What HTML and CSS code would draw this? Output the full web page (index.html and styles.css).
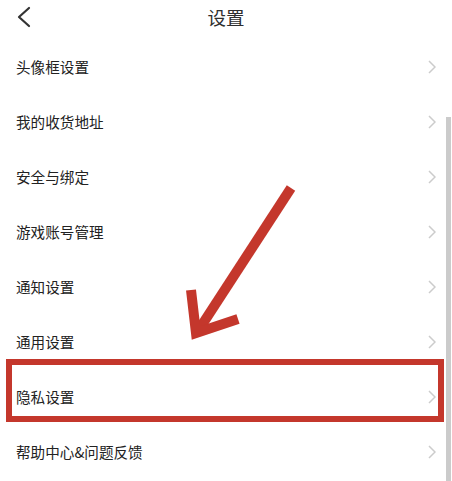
FILE: index.html
```html
<!DOCTYPE html>
<html lang="zh">
<head>
<meta charset="utf-8">
<title>设置</title>
<link rel="stylesheet" href="styles.css">
</head>
<body>
<div class="page">
  <header class="topbar">
    <div class="back">
      <svg width="14" height="22" viewBox="0 0 14 22"><polyline points="12,2 2,11 12,20" fill="none" stroke="#333" stroke-width="2.2" stroke-linecap="round" stroke-linejoin="round"/></svg>
    </div>
    <h1 class="title">设置</h1>
    <div class="spacer"></div>
  </header>
  <ul class="list">
    <li class="row"><span class="label">头像框设置</span><span class="chev"><svg width="8" height="14" viewBox="0 0 8 14"><polyline points="1,1 7,7 1,13" fill="none" stroke="#cccccc" stroke-width="1.5"/></svg></span></li>
    <li class="row"><span class="label">我的收货地址</span><span class="chev"><svg width="8" height="14" viewBox="0 0 8 14"><polyline points="1,1 7,7 1,13" fill="none" stroke="#cccccc" stroke-width="1.5"/></svg></span></li>
    <li class="row"><span class="label">安全与绑定</span><span class="chev"><svg width="8" height="14" viewBox="0 0 8 14"><polyline points="1,1 7,7 1,13" fill="none" stroke="#cccccc" stroke-width="1.5"/></svg></span></li>
    <li class="row"><span class="label">游戏账号管理</span><span class="chev"><svg width="8" height="14" viewBox="0 0 8 14"><polyline points="1,1 7,7 1,13" fill="none" stroke="#cccccc" stroke-width="1.5"/></svg></span></li>
    <li class="row"><span class="label">通知设置</span><span class="chev"><svg width="8" height="14" viewBox="0 0 8 14"><polyline points="1,1 7,7 1,13" fill="none" stroke="#cccccc" stroke-width="1.5"/></svg></span></li>
    <li class="row"><span class="label">通用设置</span><span class="chev"><svg width="8" height="14" viewBox="0 0 8 14"><polyline points="1,1 7,7 1,13" fill="none" stroke="#cccccc" stroke-width="1.5"/></svg></span></li>
    <li class="row"><span class="label">隐私设置</span><span class="chev"><svg width="8" height="14" viewBox="0 0 8 14"><polyline points="1,1 7,7 1,13" fill="none" stroke="#cccccc" stroke-width="1.5"/></svg></span></li>
    <li class="row"><span class="label">帮助中心&amp;问题反馈</span><span class="chev"><svg width="8" height="14" viewBox="0 0 8 14"><polyline points="1,1 7,7 1,13" fill="none" stroke="#cccccc" stroke-width="1.5"/></svg></span></li>
  </ul>
  <div class="scrollbar"></div>
  <div class="highlight"></div>
  <svg class="arrow" width="452" height="481" viewBox="0 0 452 481">
    <line x1="291" y1="188" x2="198" y2="331" stroke="#c4372c" stroke-width="10"/>
    <polyline points="191,290 196,333 238,319" fill="none" stroke="#c4372c" stroke-width="10" stroke-linejoin="miter"/>
  </svg>
</div>
</body>
</html>
```
FILE: styles.css
```css
* { box-sizing: border-box; }
html, body {
  margin: 0;
  padding: 0;
  background: #ffffff;
}
body {
  font-family: "Noto Sans CJK SC", "Noto Sans", sans-serif;
  color: #333333;
}
.page {
  position: relative;
  width: 452px;
  height: 481px;
  overflow: hidden;
  background: #ffffff;
}
.topbar {
  display: grid;
  grid-template-columns: 1fr auto 1fr;
  align-items: center;
  height: 34px;
  margin-bottom: 5px;
}
.back {
  display: flex;
  align-items: center;
  padding-left: 17px;
}
.back svg { display: block; }
.title {
  margin: 0;
  font-size: 18.5px;
  font-weight: 400;
  color: #2e2e2e;
  line-height: 34px;
}
.list {
  list-style: none;
  margin: 0;
  padding: 0;
}
.row {
  display: flex;
  align-items: center;
  justify-content: space-between;
  height: 55px;
  padding: 0 16px 0 16px;
}
.label {
  font-size: 14.6px;
  color: #222222;
  line-height: 20px;
}
.chev {
  display: flex;
  align-items: center;
  width: 8px;
}
.chev svg { display: block; }
.scrollbar {
  position: absolute;
  right: 1px;
  top: 117px;
  width: 5px;
  bottom: 0;
  background: #cbcbcb;
}
.highlight {
  position: absolute;
  left: 6px;
  top: 359px;
  width: 438px;
  height: 63px;
  border: 6.5px solid #c4372c;
}
.arrow {
  position: absolute;
  left: 0;
  top: 0;
  pointer-events: none;
}
```
